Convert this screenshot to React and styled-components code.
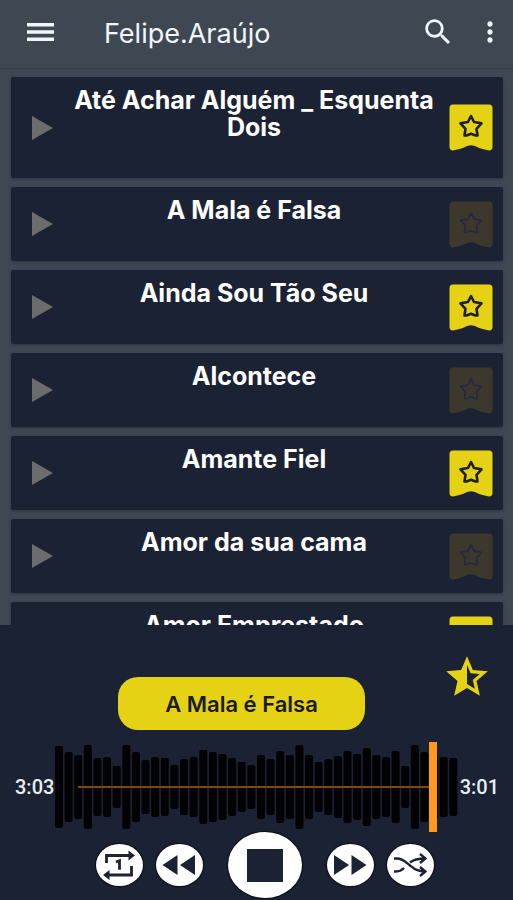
import React, { useState } from "react";
import styled, { createGlobalStyle } from "styled-components";
import { MdMoreVert, MdSearch, MdStarHalf } from "react-icons/md";

const GlobalStyle = createGlobalStyle`
  * {
    box-sizing: border-box;
  }
  body {
    margin: 0;
    background: #1b2233;
    font-family: Inter, "Open Sans", sans-serif;
  }
  button {
    font-family: inherit;
    border: none;
    padding: 0;
    background: none;
    cursor: pointer;
  }
  svg {
    display: block;
  }
`;

const Screen = styled.div`
  display: flex;
  flex-direction: column;
  height: 100vh;
`;

const Header = styled.header`
  display: flex;
  align-items: center;
  flex-shrink: 0;
  height: 69px;
  padding: 0 7px 4px 24px;
  background: #3f4852;
  border-bottom: 1px solid #39404b;
  color: #f1f6fc;
`;

const HeaderTitle = styled.h1`
  flex: 1;
  margin: 0 0 0 48px;
  padding-top: 4px;
  font-size: 27px;
  line-height: 32px;
  font-weight: 400;
`;

const HeaderButton = styled.button`
  color: inherit;
  margin-left: ${({ $gap }) => $gap || 0}px;
`;

const SongList = styled.ul`
  flex: 1;
  min-height: 0;
  overflow: hidden;
  display: flex;
  flex-direction: column;
  gap: 9px;
  margin: 0;
  padding: 8px 10px 0 11px;
  list-style: none;
  background: #3f4852;
`;

const SongCard = styled.li`
  display: flex;
  align-items: center;
  flex-shrink: 0;
  min-height: 74px;
  padding: 10px 10px 10px 20px;
  border-radius: 2px;
  background: #1b2233;
  box-shadow: 0 1px 3px #2c3440;
`;

const SongTitle = styled.h2`
  flex: 1;
  align-self: flex-start;
  margin: 0;
  padding: 0 0 27px 6px;
  color: #fff;
  font-size: 25px;
  line-height: 27px;
  font-weight: 700;
  text-align: center;
`;

const BadgeButton = styled.button`
  color: ${({ $on }) => ($on ? "#e6d215" : "#3c392c")};

  path:last-child {
    stroke: ${({ $on }) => ($on ? "#1c1f24" : "#262a40")};
    stroke-width: ${({ $on }) => ($on ? 2.6 : 1.8)};
  }
`;

const Player = styled.footer`
  flex-shrink: 0;
  padding: 26px 0 2px;
  background: #1b2233;
`;

const NowPlaying = styled.div`
  display: grid;
  grid-template-columns: 118fr 247fr 148fr;
  align-items: start;
`;

const SongPill = styled.button`
  grid-column: 2;
  height: 53px;
  margin-top: 26px;
  border-radius: 20px;
  background: #e6d215;
  color: #1b1a10;
  font-size: 22px;
  font-weight: 600;
`;

const RateButton = styled.button`
  justify-self: end;
  margin: 1px 21px 0 0;
  color: #e6d215;
`;

const SeekRow = styled.div`
  display: flex;
  align-items: center;
  margin-top: 12px;
  padding: 0 14px 0 15px;
  color: #e8ecf5;
  font-family: Roboto, sans-serif;
  font-size: 20px;
  font-weight: 500;
`;

const Wave = styled.div`
  position: relative;
  flex: 1;
  height: 90px;
  margin: 0 1px;
`;

const SeekBar = styled.input`
  position: absolute;
  top: 0;
  left: 23px;
  width: calc(100% - 41px);
  height: 90px;
  margin: 0;
  appearance: none;
  background: linear-gradient(#7d4a0f, #7d4a0f) 0 50% / 98% 2px no-repeat;
  cursor: pointer;

  &::-webkit-slider-thumb {
    appearance: none;
    width: 8px;
    height: 90px;
    background: #ff9a1f;
  }
`;

const Controls = styled.div`
  display: flex;
  align-items: center;
  justify-content: center;
  gap: 13px;
  padding-left: 16px;
`;

const RoundButton = styled.button`
  width: 47px;
  height: 42px;
  display: flex;
  align-items: center;
  justify-content: center;
  border-radius: 50%;
  background: #fff;
  color: #1b2233;
  box-shadow: 0 0 1px 1px #0b0d15;
`;

const StopButton = styled(RoundButton)`
  width: 74px;
  height: 66px;
  margin: 0 12px;
`;

const songs = [
  { title: "Até Achar Alguém _ Esquenta Dois", favorite: true },
  { title: "A Mala é Falsa", favorite: false },
  { title: "Ainda Sou Tão Seu", favorite: true },
  { title: "Alcontece", favorite: false },
  { title: "Amante Fiel", favorite: true },
  { title: "Amor da sua cama", favorite: false },
  { title: "Amor Emprestado", favorite: true },
];

const bars = [
  82, 70, 64, 84, 58, 60, 42, 84, 70, 54, 60, 58, 44, 56, 60, 74, 70, 66, 58,
  50, 44, 64, 56, 72, 64, 84, 64, 50, 56, 62, 72, 66, 78, 64, 60, 72, 42, 84,
  70, 64, 60, 58,
];

const MenuIcon = () => (
  <svg width="32" height="24" viewBox="0 0 32 24" fill="currentColor">
    <path d="M3 3h27v3.4H3zM3 10.3h27v3.4H3zM3 17.6h27V21H3z" />
  </svg>
);

const PlayIcon = () => (
  <svg width="22" height="24" viewBox="0 0 22 24">
    <path d="M1 0 22 12 1 24z" fill="#6c6c6c" />
  </svg>
);

const FavoriteIcon = () => (
  <svg width="44" height="47" viewBox="0 0 44 47">
    <path
      d="M4 .5h36A3.500 3.500 0 0 1 43.500 4v39c0 2.600-2 4.200-4.500 3.300-5-1.300-8-1.800-11-3.300-2-1-4-1.700-6-1.700s-4 .7-6 1.700c-3 1.500-6 2-11 3.300C2.500 47.200.5 45.600.5 43V4A3.500 3.500 0 0 1 4 .5z"
      fill="currentColor"
    />
    <path
      d="M22 12l3 6 7.500 1.300-5 5.500 1 6.700h-2L22 29.800l-4.500 1.700h-2l1-6.700-5-5.500L19 18z"
      fill="none"
      strokeLinejoin="round"
    />
  </svg>
);

const RepeatOneIcon = () => (
  <svg width="34" height="32" viewBox="0 0 34 32">
    <path
      d="M4.500 14V6.500H27M29.500 17v9H7"
      fill="none"
      stroke="currentColor"
      strokeWidth="2.800"
    />
    <path d="M26.500 1.500 33 6.500 26.500 11.500zM7.500 21 1 26l6.500 5z" fill="currentColor" />
    <path d="M14 13l3.500-1.200v9" fill="none" stroke="currentColor" strokeWidth="2.800" />
  </svg>
);

const RewindIcon = () => (
  <svg width="34" height="20" viewBox="0 0 34 20" fill="currentColor">
    <path d="M15.500 0v20L.5 10zM33 0v20L18 10z" />
  </svg>
);

const ForwardIcon = () => (
  <svg width="34" height="20" viewBox="0 0 34 20" fill="currentColor">
    <path d="M1 0v20l15-10zM18.500 0v20l15-10z" />
  </svg>
);

const StopIcon = () => (
  <svg width="36" height="33" viewBox="0 0 36 33">
    <path d="M0 0h36v33H0z" fill="currentColor" />
  </svg>
);

const ShuffleIcon = () => (
  <svg width="34" height="24" viewBox="0 0 34 24">
    <path
      d="M1 5.500h3c6 0 9 4 13 7S24 18.500 32 18.500M1 18.500h2c4 0 6-1.500 8-3.500M17 9.500C20 7 23 5.500 32 5.500M27 1l5.500 4.500L27 10M27 14l5.500 4.500L27 23"
      fill="none"
      stroke="currentColor"
      strokeWidth="2.400"
    />
  </svg>
);

const WaveForm = () => (
  <svg width="100%" height="90" viewBox="0 0 405 90" preserveAspectRatio="none">
    {bars.map((h, i) => (
      <rect key={i} x={i * 9.66} y={45 - h / 2} width="8" height={h} rx="2" fill="#020204" />
    ))}
  </svg>
);

const Song = ({ title, favorite }) => {
  const [on, setOn] = useState(favorite);

  return (
    <SongCard>
      <button aria-label={`Tocar ${title}`}>
        <PlayIcon />
      </button>
      <SongTitle>{title}</SongTitle>
      <BadgeButton $on={on} aria-label="Favorita" aria-pressed={on} onClick={() => setOn(!on)}>
        <FavoriteIcon />
      </BadgeButton>
    </SongCard>
  );
};

const App = () => {
  const [position, setPosition] = useState(181);

  return (
    <>
      <GlobalStyle />
      <Screen>
        <Header>
          <HeaderButton aria-label="Menu">
            <MenuIcon />
          </HeaderButton>
          <HeaderTitle>Felipe.Araújo</HeaderTitle>
          <HeaderButton aria-label="Buscar">
            <MdSearch size={34} />
          </HeaderButton>
          <HeaderButton aria-label="Mais" $gap={19}>
            <MdMoreVert size={32} />
          </HeaderButton>
        </Header>
        <SongList>
          {songs.map((song) => (
            <Song key={song.title} {...song} />
          ))}
        </SongList>
        <Player>
          <NowPlaying>
            <SongPill>A Mala é Falsa</SongPill>
            <RateButton aria-label="Avaliar">
              <MdStarHalf size={50} />
            </RateButton>
          </NowPlaying>
          <SeekRow>
            <span>3:03</span>
            <Wave>
              <WaveForm />
              <SeekBar
                type="range"
                aria-label="Posição"
                min="0"
                max="183"
                value={position}
                onChange={(e) => setPosition(Number(e.target.value))}
              />
            </Wave>
            <span>3:01</span>
          </SeekRow>
          <Controls>
            <RoundButton aria-label="Repetir uma">
              <RepeatOneIcon />
            </RoundButton>
            <RoundButton aria-label="Anterior">
              <RewindIcon />
            </RoundButton>
            <StopButton aria-label="Parar">
              <StopIcon />
            </StopButton>
            <RoundButton aria-label="Próxima">
              <ForwardIcon />
            </RoundButton>
            <RoundButton aria-label="Aleatório">
              <ShuffleIcon />
            </RoundButton>
          </Controls>
        </Player>
      </Screen>
    </>
  );
};

export default App;
